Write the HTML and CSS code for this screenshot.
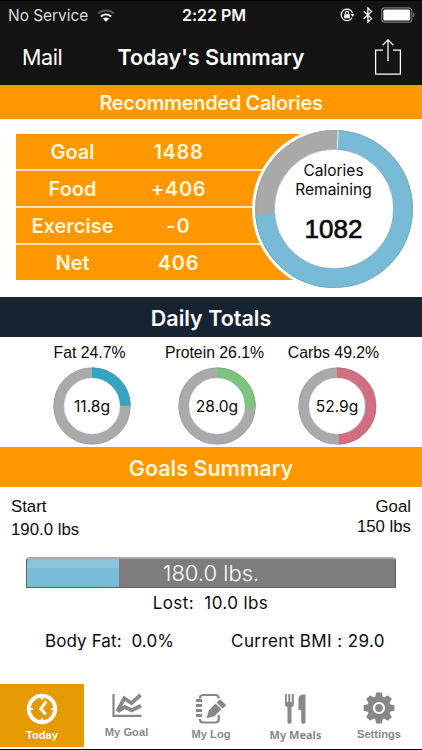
FILE: index.html
```html
<!DOCTYPE html>
<html lang="en">
<head>
<meta charset="utf-8">
<title>Today's Summary</title>
<link rel="stylesheet" href="styles.css">
</head>
<body>
<header class="top">
  <div class="status">
    <div class="status-left"><span class="carrier">No Service</span>
      <svg class="wifi" width="18" height="13" viewBox="0 0 18 13" fill="none"><path d="M1 4.6C5.6.3 12.4.3 17 4.6" stroke="#555" stroke-width="2"/><path d="M3.9 7.4c3-2.6 7.2-2.6 10.2 0" stroke="#fff" stroke-width="2"/><path d="M9 12.8 6 9.7c1.7-1.5 4.3-1.5 6 0z" fill="#fff"/></svg>
    </div>
    <span class="time">2:22 PM</span>
    <div class="status-right">
      <svg width="15" height="14" viewBox="0 0 15 14" fill="none" stroke="#fff"><path d="M12.1 9.7A5.8 5.8 0 1 1 12.5 5" stroke-width="1.2"/><path d="M10.5 6h4.2l-2.1 2.8z" fill="#fff" stroke="none"/><path d="M5.4 6.6V5a1.6 1.6 0 0 1 3.2 0v1.6" stroke-width="1.1"/><rect x="4.2" y="6.3" width="5.6" height="4" rx=".4" fill="#fff" stroke="none"/></svg>
      <svg width="10" height="16" viewBox="0 0 10 16" fill="none" stroke="#fff" stroke-width="1.3"><path d="M.8 4.2 8.6 11.4 4.9 15V1l3.7 3.6L.8 11.8"/></svg>
      <svg width="34" height="16" viewBox="0 0 34 16"><rect x=".7" y=".9" width="30" height="14.2" rx="3.2" fill="none" stroke="#777" stroke-width="1.2"/><rect x="2.3" y="2.5" width="26.8" height="11" rx="1.6" fill="#fff"/><path d="M32 5.5c2 .7 2 4.3 0 5z" fill="#777"/></svg>
    </div>
  </div>
  <nav class="nav">
    <span class="mail">Mail</span>
    <h1>Today's Summary</h1>
    <svg class="share" width="28" height="38" viewBox="0 0 28 38" fill="none" stroke="#fff" stroke-width="1.3"><path d="M9 12.2H1.6v23.9h24.8V12.2H19M14 23V2M8.6 7.2 14 1.8l5.4 5.4"/></svg>
  </nav>
</header>

<h2 class="band band-rec"><span>Recommended Calories</span></h2>
<section class="calories">
  <div class="rows">
    <div class="row"><span>Goal</span><span class="num">1488</span></div>
    <div class="row"><span>Food</span><span class="num">+406</span></div>
    <div class="row"><span>Exercise</span><span class="num">-0</span></div>
    <div class="row"><span>Net</span><span class="num">406</span></div>
  </div>
  <div class="remaining">
    <svg width="166" height="166" viewBox="-83 -83 166 166">
      <circle r="82" fill="#fff"/>
      <circle r="69.3" fill="none" stroke="#a9a9a9" stroke-width="19.2"/>
      <path d="M3.6-69.2A69.3 69.3 0 1 1-69.1 5.2" fill="none" stroke="#78bbd6" stroke-width="19.2"/>
      <path d="M3.3-59.5 4.1-78.8" stroke="#e4eef2"/>
      <circle r="78.5" fill="none" stroke="#526e7a" stroke-opacity=".18"/>
      <circle r="59.6" fill="none" stroke="#526e7a" stroke-opacity=".35"/>
    </svg>
    <div class="remaining-text"><span class="cap">Calories</span><span class="cap">Remaining</span><span class="big">1082</span></div>
  </div>
</section>

<h2 class="band band-daily"><span>Daily Totals</span></h2>
<section class="macros">
  <div class="macro fat">
    <span class="macro-label">Fat 24.7%</span>
    <div class="ring"><svg width="80" height="80" viewBox="-40 -40 80 80"><circle r="33.4" fill="none" stroke="#aaa" stroke-width="10.4"/><path d="M0-33.4A33.4 33.4 0 0 1 33.4-.3" fill="none" stroke="#31a5c2" stroke-width="10.4"/><circle class="edge" r="38.3"/><circle class="edge-in" r="28"/></svg><span>11.8g</span></div>
  </div>
  <div class="macro protein">
    <span class="macro-label">Protein 26.1%</span>
    <div class="ring"><svg width="80" height="80" viewBox="-40 -40 80 80"><circle r="33.4" fill="none" stroke="#aaa" stroke-width="10.4"/><path d="M0-33.4A33.4 33.4 0 0 1 33.3 2.3" fill="none" stroke="#7bc57d" stroke-width="10.4"/><circle class="edge" r="38.3"/><circle class="edge-in" r="28"/></svg><span>28.0g</span></div>
  </div>
  <div class="macro carbs">
    <span class="macro-label">Carbs 49.2%</span>
    <div class="ring"><svg width="80" height="80" viewBox="-40 -40 80 80"><circle r="33.4" fill="none" stroke="#aaa" stroke-width="10.4"/><path d="M0-33.4A33.4 33.4 0 0 1 1.7 33.4" fill="none" stroke="#d26d82" stroke-width="10.4"/><circle class="edge" r="38.3"/><circle class="edge-in" r="28"/></svg><span>52.9g</span></div>
  </div>
</section>

<h2 class="band band-goals"><span>Goals Summary</span></h2>
<section class="goals">
  <div class="ends">
    <div class="start"><span>Start</span><span>190.0 lbs</span></div>
    <div class="target"><span>Goal</span><span>150 lbs</span></div>
  </div>
  <div class="bar"><div class="fill" style="width:25%"></div><span>180.0 lbs.</span></div>
  <p class="lost">Lost:&nbsp; 10.0 lbs</p>
  <div class="stats"><span class="fatpct">Body Fat:&nbsp; 0.0%</span><span class="bmi">Current BMI : 29.0</span></div>
</section>

<footer class="tabs">
  <div class="tab today">
    <svg width="32" height="32" viewBox="-16 -16 32 32" fill="none" stroke="#fff"><circle r="13.2" stroke-width="4"/><path d="M4.2-7.6-1.2-.2 3.8 5.5" stroke-width="3"/><path d="M0-12v3M0 12V9M-12 0h3M12 0H9" stroke-width="2.2"/></svg>
    <span>Today</span>
  </div>
  <div class="tab goal">
    <svg width="30" height="25" viewBox="0 0 30 25" fill="none" stroke="#888"><path d="M1.5 1v21.8H29.5" stroke-width="2.2"/><path d="M5.3 18.5 12.3 5.300l7.2 4.900 9-8.200" stroke-width="3.8"/><path d="m6 18.5 6.5-4.500 7.200 3.300 9.300-4.600" stroke-width="3.8"/></svg>
    <span>My Goal</span>
  </div>
  <div class="tab log">
    <svg width="32" height="32" viewBox="0 0 32 32" fill="none" stroke="#888"><path d="M4.8 5.5c0-2.4 1.1-3.5 3.5-3.5h12c2.3 0 3.5 1.1 3.5 3.5M23.8 22v4c0 2.4-1.2 3.5-3.5 3.5h-12c-2.4 0-3.5-1.1-3.5-3.5" stroke-width="2.2"/><path d="M1 7.5h6M1 12.5h6M1 17.5h6M1 22.5h6" stroke-width="3.2"/><path d="m11.7 25.3 2-7.8 6.9-6.9 5.7 5.7-6.9 6.9zM21.6 9.6l2.800-2.700q.8-.7 1.600 0l4.600 4.500q.8.8 0 1.600l-3.200 2.400z" fill="#888" stroke="none"/></svg>
    <span>My Log</span>
  </div>
  <div class="tab meals">
    <svg width="24" height="32" viewBox="0 0 24 32" fill="#888"><path d="M1 1h1.800v8h1.500V1h2v8h1.500V1h2v10c0 2-1 2.800-2.300 3.200V29c0 2.400-4 2.400-4 0V14.200C2 13.800 1 13 1 11zM14.500 6c0-3 2-5 7-4.500V29c0 2.400-4.300 2.400-4.300 0V17h-2.700z"/></svg>
    <span>My Meals</span>
  </div>
  <div class="tab settings">
    <svg width="32" height="32" viewBox="-16 -16 32 32"><g fill="#888"><circle r="11.7"/><path id="tooth" d="M-4-10-2.800-15.400h5.600L4-10v20L2.800 15.400h-5.600L-4 10z"/><use href="#tooth" transform="rotate(45)"/><use href="#tooth" transform="rotate(90)"/><use href="#tooth" transform="rotate(135)"/></g><circle r="5" fill="#888" stroke="#fff" stroke-width="2.2"/></svg>
    <span>Settings</span>
  </div>
</footer>
</body>
</html>
```
FILE: styles.css
```css
* { box-sizing: border-box; margin: 0; padding: 0; }
body { width: 422px; height: 750px; overflow: hidden; background: #fff; color: #0b0b0b; font-family: Inter, sans-serif; display: flex; flex-direction: column; }
svg { display: block; flex: none; }
span { white-space: nowrap; }
.top { height: 85px; background: #131313; border-top: 1px solid #000; color: #fff; flex: none; }
.status { height: 28px; display: grid; grid-template-columns: 1fr auto 1fr; align-items: center; padding: 0 7px 0 8px; font-size: 16px; }
.status-left, .status-right { display: flex; align-items: center; }
.status-left { gap: 9px; color: #ddd; }
.status-right { justify-content: flex-end; gap: 8px; }
.carrier { font-size: 15.5px; letter-spacing: -.05px; }
.time { font-weight: 600; padding-left: 5px; letter-spacing: -.05px; }
.nav { height: 56px; display: grid; grid-template-columns: 97px 1fr 97px; align-items: center; }
.mail { padding-left: 22px; font-size: 21.5px; letter-spacing: -.4px; }
.nav h1 { font-size: 21.6px; font-weight: 600; line-height: 54px; text-align: center; white-space: nowrap; letter-spacing: -.1px; }
.share { justify-self: end; margin-right: 20px; }
.band { flex: none; display: flex; align-items: center; justify-content: center; background: #ff9800; color: #fff6dc; font-weight: 600; }
.band-rec { height: 35px; font-size: 20px; letter-spacing: -.35px; padding-top: 1px; border-bottom: 1px solid #fff5ce; }
.band-daily { height: 40px; font-size: 21.5px; padding-top: 1px; background: #162331; color: #fff; }
.band-goals { height: 40px; font-size: 21.5px; padding-top: 1px; }
.calories { height: 177px; flex: none; display: flex; padding: 14px 0 0 16px; }
.rows { width: 285px; display: grid; grid-auto-rows: 37px; flex: none; }
.row { display: grid; grid-template-columns: 113px 99px; align-items: center; text-align: center; background: #ff9800; border-bottom: 2px solid #ffe5a8; color: #fff6dc; font-size: 20px; font-weight: 600; }
.row .num { letter-spacing: .7px; }
.row:last-child { height: 35px; border: 0; }
.remaining { flex: none; width: 166px; height: 166px; margin: -8px 0 0 -50.5px; display: grid; }
.remaining > * { grid-area: 1 / 1; }
.remaining-text { display: flex; flex-direction: column; align-items: center; text-align: center; padding-top: 36px; }
.cap { font-size: 15.5px; line-height: 18.5px; }
.big { font-family: "Liberation Sans", sans-serif; font-size: 26px; line-height: 30px; margin-top: 15px; -webkit-text-stroke: .7px; }
.macros { height: 110px; flex: none; display: grid; grid-template-columns: 126px 124px 116px; padding: 6px 0 0 29px; }
.macro { display: flex; flex-direction: column; align-items: center; font-family: "Liberation Sans", sans-serif; font-size: 15.8px; }
.macro-label { line-height: 20px; margin-left: -5px; }
.carbs .macro-label { margin-left: -7px; }
.ring { display: grid; place-items: center; margin-top: 3px; font-family: Inter, sans-serif; font-size: 15.6px; }
.ring > * { grid-area: 1 / 1; }
.edge, .edge-in { fill: none; stroke: #777; stroke-opacity: .25; }
.edge-in { stroke: #888; }
.goals { height: 197px; flex: none; font-family: "Liberation Sans", sans-serif; }
.ends { height: 70px; display: flex; justify-content: space-between; padding: 9px 11px 0; font-size: 16.8px; }
.start, .target { display: flex; flex-direction: column; line-height: 22.5px; }
.target { text-align: right; line-height: 20px; padding-top: 1px; }
.bar { width: 370px; height: 31px; margin-left: 26px; display: grid; background: #7d7d7d; border: 1px solid #606060; border-top: 2px solid #aaa; border-radius: 4px 4px 0 0; color: #fff; font-family: Inter, sans-serif; }
.bar > * { grid-area: 1 / 1; }
.bar span { place-self: center; font-size: 22px; font-weight: 300; }
.fill { height: 28px; background: linear-gradient(#8ac5dc 0 9px, #78bbd6 9px); border-radius: 3px 0 0 0; }
.lost, .stats { font-family: Inter, sans-serif; font-size: 17px; }
.lost { text-align: center; line-height: 22px; margin-top: 4px; letter-spacing: .4px; padding-right: 1px; }
.stats { display: flex; justify-content: space-between; padding: 17px 37px 0 45px; line-height: 20px; }
.fatpct { letter-spacing: .1px; }
.bmi { letter-spacing: .4px; }
.tabs { height: 66px; flex: none; display: grid; grid-template-columns: 84px 85px 84px 85px 84px; border-bottom: 1px solid #000; font-family: "Liberation Sans", sans-serif; font-size: 11.2px; font-weight: 700; color: #888; }
.tab { display: flex; flex-direction: column; align-items: center; height: 63px; padding-top: 9px; }
.tab span { margin-top: auto; line-height: 14px; margin-bottom: 6px; }
.goal span { margin-bottom: 8px; }
.today span { margin-bottom: 5px; }
.meals span { font-family: "Noto Sans", sans-serif; font-size: 11px; margin-bottom: 5px; }
.settings { padding-top: 8px; padding-right: 2px; }
.today { background: #e69a02; color: #fff; }
```
